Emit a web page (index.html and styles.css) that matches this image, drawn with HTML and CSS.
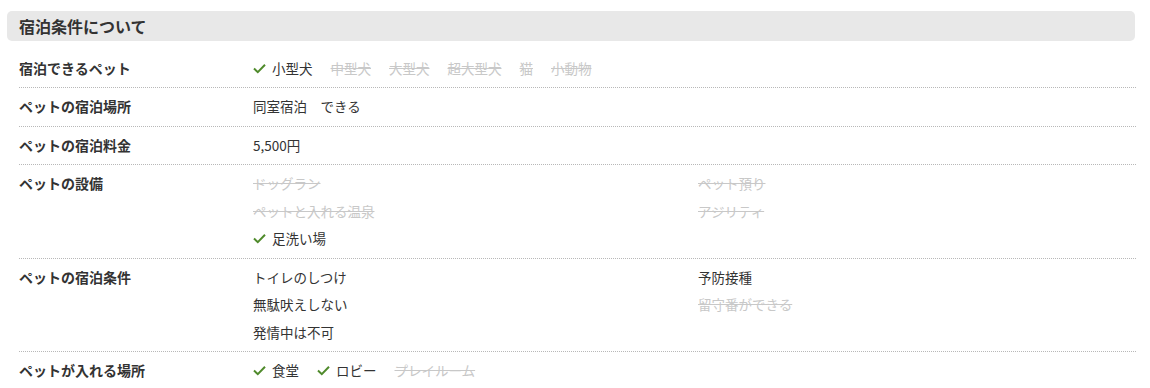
FILE: index.html
```html
<!DOCTYPE html>
<html lang="ja">
<head>
<meta charset="utf-8">
<link rel="stylesheet" href="styles.css">
</head>
<body>
<div class="wrap">
  <h2 class="section-title">宿泊条件について</h2>
  <div class="table">
    <div class="row">
      <div class="label">宿泊できるペット</div>
      <div class="value inline">
        <span class="item ok"><svg class="check" viewBox="0 0 13 11"><polyline points="1,5.5 4.8,9.2 12,1.8"/></svg>小型犬</span>
        <span class="item ng">中型犬</span>
        <span class="item ng">大型犬</span>
        <span class="item ng">超大型犬</span>
        <span class="item ng">猫</span>
        <span class="item ng">小動物</span>
      </div>
    </div>
    <div class="row">
      <div class="label">ペットの宿泊場所</div>
      <div class="value">同室宿泊　できる</div>
    </div>
    <div class="row">
      <div class="label">ペットの宿泊料金</div>
      <div class="value">5,500円</div>
    </div>
    <div class="row">
      <div class="label">ペットの設備</div>
      <div class="value cols">
        <span class="item ng">ドッグラン</span>
        <span class="item ng">ペット預り</span>
        <span class="item ng">ペットと入れる温泉</span>
        <span class="item ng">アジリティ</span>
        <span class="item ok"><svg class="check" viewBox="0 0 13 11"><polyline points="1,5.5 4.8,9.2 12,1.8"/></svg>足洗い場</span>
      </div>
    </div>
    <div class="row">
      <div class="label">ペットの宿泊条件</div>
      <div class="value cols">
        <span class="item">トイレのしつけ</span>
        <span class="item">予防接種</span>
        <span class="item">無駄吠えしない</span>
        <span class="item ng">留守番ができる</span>
        <span class="item">発情中は不可</span>
      </div>
    </div>
    <div class="row">
      <div class="label">ペットが入れる場所</div>
      <div class="value inline">
        <span class="item ok"><svg class="check" viewBox="0 0 13 11"><polyline points="1,5.5 4.8,9.2 12,1.8"/></svg>食堂</span>
        <span class="item ok"><svg class="check" viewBox="0 0 13 11"><polyline points="1,5.5 4.8,9.2 12,1.8"/></svg>ロビー</span>
        <span class="item ng">プレイルーム</span>
      </div>
    </div>
  </div>
</div>
</body>
</html>
```

FILE: styles.css
```css
html, body {
  margin: 0;
  padding: 0;
  background: #fff;
}
body {
  font-family: "Noto Sans CJK JP", "Noto Sans", sans-serif;
  color: #333;
  font-size: 14px;
}
.wrap {
  padding: 11px 15px 0 7px;
}
.section-title {
  margin: 0;
  height: 30px;
  line-height: 30px;
  padding: 0 12px;
  background: #e8e8e8;
  border-radius: 5px;
  font-size: 16px;
  font-weight: bold;
  color: #333;
}
.table {
  margin: 8.5px -1px 0 12px;
}
.row {
  display: grid;
  grid-template-columns: 234px 1fr;
  padding: 5px 0;
  border-bottom: 1px dotted #b8b8b8;
  line-height: 27.5px;
}
.label {
  font-weight: bold;
  font-size: 14px;
}
.value {
  font-size: 13.5px;
}
.inline {
  display: flex;
  gap: 18px;
}
.cols {
  display: grid;
  grid-template-columns: 445px 1fr;
}
.item {
  display: inline-flex;
  align-items: center;
}
.ng {
  color: #c8c8c8;
  text-decoration: line-through;
}
.check {
  width: 13px;
  height: 11px;
  margin-right: 6px;
  fill: none;
  stroke: #4f8a2b;
  stroke-width: 2;
}
```
